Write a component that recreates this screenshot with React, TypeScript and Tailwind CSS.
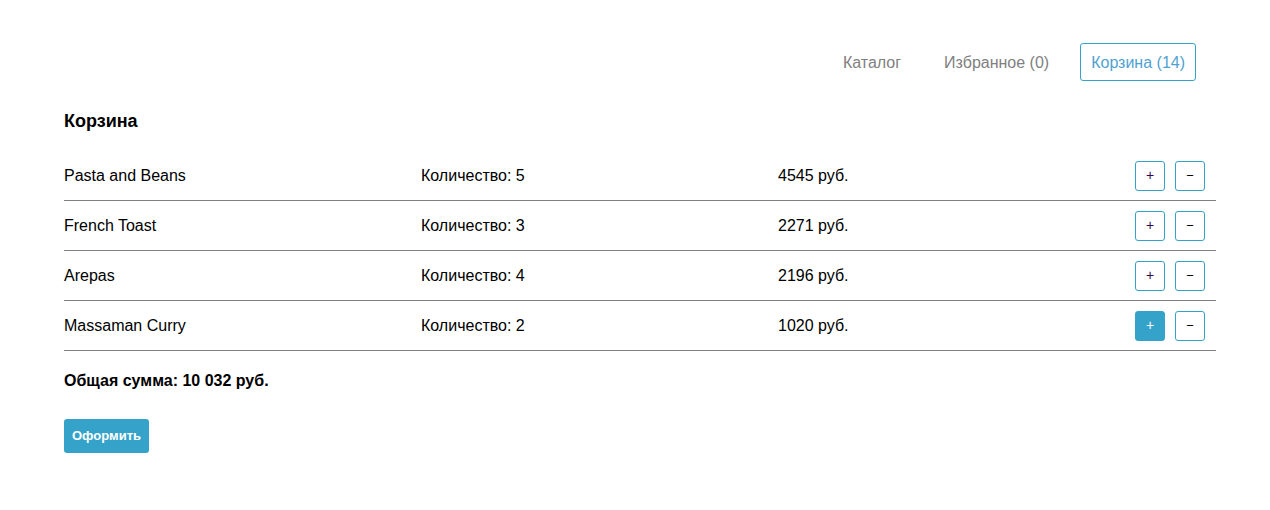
import React from "react";

const items = [
  { name: "Pasta and Beans", qty: 5, price: 4545 },
  { name: "French Toast", qty: 3, price: 2271 },
  { name: "Arepas", qty: 4, price: 2196 },
  { name: "Massaman Curry", qty: 2, price: 1020 },
];

export default function App() {
  return (
    <div className="min-h-[510px] bg-white pl-16 text-black" style={{ fontFamily: '"Liberation Sans", Arial, sans-serif' }}>
      <div className="w-[1152px]">
        <nav className="flex justify-end gap-[19px] pt-[43px] pr-5 text-[16px]">
          <a className="flex h-[38px] items-center rounded-[3px] border border-transparent px-[11px] pt-px text-[#808080]">Каталог</a>
          <a className="flex h-[38px] items-center rounded-[3px] border border-transparent px-[11px] pt-px text-[#808080]">Избранное (0)</a>
          <a className="flex h-[38px] items-center rounded-[3px] border border-[#35a3c9] px-[10px] pt-px text-[#4fa2cf]">Корзина (14)</a>
        </nav>
        <h2 className="mt-[30px] text-[18px] font-bold leading-[21px]">Корзина</h2>
        <div className="mt-[19px]">
          {items.map((it, i) => (
            <div key={i} className="grid h-[50px] grid-cols-[1fr_1fr_1fr_81px] items-center border-b border-[#808080] text-[16px]">
              <span>{it.name}</span>
              <span>Количество: {it.qty}</span>
              <span>{it.price} руб.</span>
              <div className="flex gap-[10px]">
                <button className={`flex h-[30px] w-[30px] items-center justify-center rounded-[3px] border border-[#35a3c9] text-[14px] ${i === 3 ? "bg-[#35a3c9] text-white" : "bg-white text-[#2e0854]"}`}>+</button>
                <button className="flex h-[30px] w-[30px] items-center justify-center rounded-[3px] border border-[#35a3c9] bg-white text-[13px] text-black">−</button>
              </div>
            </div>
          ))}
        </div>
        <div className="mt-[21px] text-[16px] font-bold leading-[18px]">Общая сумма: 10 032 руб.</div>
        <button className="mt-[29px] flex h-[34px] items-center rounded-[3px] bg-[#35a3c9] px-[8px] text-[13px] font-bold text-white">Оформить</button>
      </div>
    </div>
  );
}
